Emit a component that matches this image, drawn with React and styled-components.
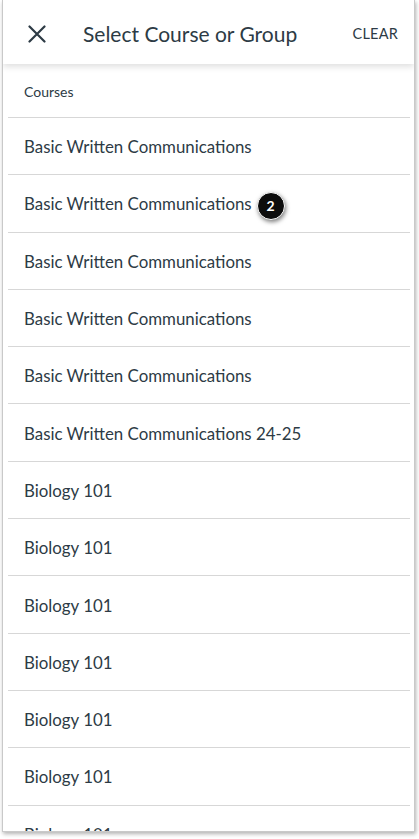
import styled, { createGlobalStyle } from "styled-components";

const GlobalStyle = createGlobalStyle`
  html, body {
    margin: 0;
    padding: 0;
    background: #ffffff;
  }
  body {
    font-family: Lato, "Open Sans", sans-serif;
    color: #2d3b45;
  }
`;

const courses = [
  "Basic Written Communications",
  "Basic Written Communications",
  "Basic Written Communications",
  "Basic Written Communications",
  "Basic Written Communications",
  "Basic Written Communications 24-25",
  "Biology 101",
  "Biology 101",
  "Biology 101",
  "Biology 101",
  "Biology 101",
  "Biology 101",
  "Biology 101",
];

const CloseIcon = () => (
  <svg width="18" height="18" viewBox="0 0 18 18">
    <path
      d="M1.5 1.5 L16.5 16.5 M16.5 1.5 L1.5 16.5"
      stroke="#2d3b45"
      strokeWidth="2.2"
      strokeLinecap="round"
    />
  </svg>
);

const App = () => {
  return (
    <>
      <GlobalStyle />
      <Page>
        <Frame>
          <Header>
            <CloseButton>
              <CloseIcon />
            </CloseButton>
            <Title>Select Course or Group</Title>
            <Clear>CLEAR</Clear>
          </Header>
          <List>
            <SectionLabel>Courses</SectionLabel>
            {courses.map((name, i) => (
              <Row key={i}>
                {name}
                {i === 1 && <Badge>2</Badge>}
              </Row>
            ))}
          </List>
        </Frame>
      </Page>
    </>
  );
};

const Page = styled.div`
  width: 419px;
  height: 839px;
  padding: 0 4px 0 2px;
  box-sizing: border-box;
  overflow: hidden;
`;
const Frame = styled.div`
  height: 832px;
  box-sizing: border-box;
  border: 1px solid #c9c9c9;
  border-top: none;
  box-shadow: 1px 2px 4px rgba(0, 0, 0, 0.3);
  overflow: hidden;
  background: #fff;
  display: flex;
  flex-direction: column;
`;
const Header = styled.div`
  height: 64px;
  flex: none;
  display: flex;
  align-items: center;
  padding: 0 16px 0 25px;
  box-shadow: 0 3px 6px rgba(0, 0, 0, 0.12);
  position: relative;
  z-index: 1;
  background: #fff;
`;
const CloseButton = styled.div`
  display: flex;
  width: 18px;
  height: 18px;
  margin-top: 4px;
  margin-right: 38px;
`;
const Title = styled.div`
  flex: 1;
  font-size: 21px;
  padding-top: 2px;
  margin-left: -1px;
`;
const Clear = styled.div`
  font-size: 14.5px;
  letter-spacing: 0.2px;
  padding-top: 2px;
`;
const List = styled.div`
  flex: 1;
  overflow: hidden;
  padding: 0 4px 0 5px;
`;
const SectionLabel = styled.div`
  height: 54px;
  display: flex;
  align-items: center;
  padding-left: 16px;
  padding-top: 1px;
  font-size: 14px;
  border-bottom: 1px solid #d7d7d7;
  box-sizing: border-box;
`;
const Row = styled.div`
  height: 57.3px;
  display: flex;
  align-items: center;
  padding-left: 16px;
  padding-top: 1px;
  font-size: 16.85px;
  border-bottom: 1px solid #d7d7d7;
  box-sizing: border-box;
`;
const Badge = styled.span`
  display: inline-flex;
  align-items: center;
  justify-content: center;
  width: 28px;
  height: 28px;
  margin-left: 5px;
  margin-top: 4px;
  border-radius: 50%;
  background: #0d0d0d;
  color: #fff;
  font-size: 14px;
  font-weight: 700;
  border: 1.5px solid #fff;
  box-sizing: border-box;
  box-shadow: 1px 2px 4px rgba(0, 0, 0, 0.5);
`;

export default App;
